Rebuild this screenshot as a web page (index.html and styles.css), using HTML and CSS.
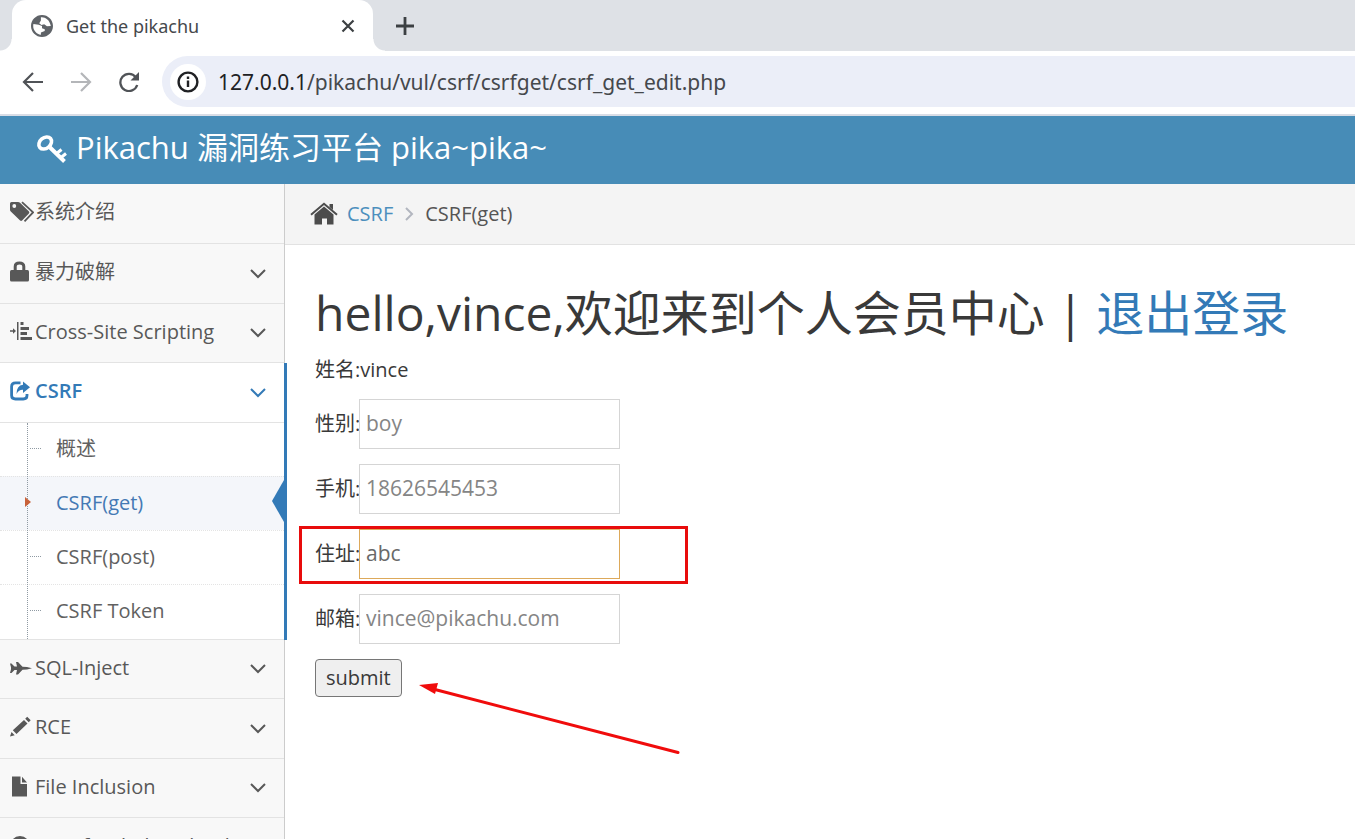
FILE: index.html
```html
<!DOCTYPE html>
<html lang="zh-CN">
<head>
<meta charset="utf-8">
<title>Get the pikachu</title>
<link rel="stylesheet" href="styles.css">
</head>
<body>
<div class="window">
  <div class="tabstrip">
    <div class="tab">
      <svg class="favicon" viewBox="2 2 20 20" aria-hidden="true"><path fill="#5f6368" d="M12 2C6.480 2 2 6.480 2 12s4.480 10 10 10 10-4.480 10-10S17.520 2 12 2zm-1 17.930c-3.950-.490-7-3.850-7-7.930 0-.620.080-1.210.210-1.790L9 10.800l3 1.200v2l2.500 1v1.500L11 18zM20 12l-3.500.3L14 10.500 11.500 11 9.500 9.500 11 7V4.100c3.500-.5 8 2 9 7.900z" transform="matrix(1 0 0 1 0 0)"/></svg>
      <span class="tab-title">Get the pikachu</span>
      <button class="icon-btn tab-close" aria-label="Close tab"><svg width="14" height="14" viewBox="0 0 14 14"><path d="m1.500 1.500 11 11m0-11-11 11" stroke="#3c4043" stroke-width="2.200"/></svg></button>
    </div>
    <button class="icon-btn new-tab" aria-label="New tab"><svg width="18" height="18" viewBox="0 0 18 18"><path d="M9 0v18M0 9h18" stroke="#3c4043" stroke-width="2.800"/></svg></button>
  </div>
  <div class="toolbar">
    <button class="icon-btn" aria-label="Back"><svg width="22" height="20" viewBox="0 0 22 20"><path d="M21 10H2m9-9-9 9 9 9" fill="none" stroke="#505357" stroke-width="2.200"/></svg></button>
    <button class="icon-btn" aria-label="Forward"><svg width="22" height="20" viewBox="0 0 22 20"><path d="M1 10h19m-9-9 9 9-9 9" fill="none" stroke="#b4b6b9" stroke-width="2.200"/></svg></button>
    <button class="icon-btn" aria-label="Reload"><svg width="22" height="20" viewBox="0 0 22 20"><path d="M17.800 5.200A8.600 8.600 0 1 0 19.200 13" fill="none" stroke="#505357" stroke-width="2.300"/><path d="M21 0v8.500h-8.500z" fill="#505357"/></svg></button>
    <div class="omnibox">
      <span class="site-info"><svg width="22" height="22" viewBox="0 0 22 22"><circle cx="11" cy="11" r="9.400" fill="none" stroke="#202124" stroke-width="2.400"/><path d="M11 9.500V16M11 5.500V8" stroke="#202124" stroke-width="2.400"/></svg></span>
      <span class="url"><b>127.0.0.1</b>/pikachu/vul/csrf/csrfget/csrf_get_edit.php</span>
    </div>
  </div>
  <header class="navbar">
    <svg width="32" height="30" viewBox="0 0 32 30" aria-hidden="true"><g fill="none" stroke="#fff"><ellipse cx="9.200" cy="9" rx="7" ry="5.300" stroke-width="3.600" transform="rotate(-40 9.200 9)"/><path d="M13 12.500 28.500 27.500" stroke-width="4"/><path d="m20 20 5.500-4.500M24.500 24l5.500-4.500" stroke-width="3"/></g></svg>
    <span class="brand">Pikachu 漏洞练习平台 pika~pika~</span>
  </header>
  <div class="body">
    <nav class="sidebar">
      <ul class="menu">
        <li><a class="item" href="#"><svg class="ico" viewBox="0 0 24 22"><path fill="currentColor" d="M0 2.500Q0 1 1.500 1H8q1.200 0 2 .8l9 8.700q.8 1-.1 1.900l-6.800 7.200q-1 .9-2 0L.8 10.500Q0 9.800 0 8.500z"/><circle cx="4.300" cy="5" r="1.900" fill="#f8f8f8"/><path d="m12 1.200 11 10.200-8.500 9" fill="none" stroke="currentColor" stroke-width="1.800"/></svg>系统介绍</a></li>
        <li><a class="item" href="#"><svg class="ico" viewBox="0 0 24 22"><path fill="currentColor" d="M1.500 9h16q1.500 0 1.500 1.500V19q0 1.500-1.500 1.500h-16Q0 20.500 0 19v-8.500Q0 9 1.500 9z"/><path d="M5.200 10V5.500q0-3.500 4.300-3.500t4.300 3.500V10" fill="none" stroke="currentColor" stroke-width="3"/></svg>暴力破解<svg class="chev" viewBox="0 0 16 10"><path d="m1 1 7 7 7-7"/></svg></a></li>
        <li><a class="item" href="#"><svg class="ico wide" viewBox="0 0 24 22"><path fill="currentColor" d="M0 9.300h3v-2l3 2.700-3 2.700v-2H0zM7 1h1.500v18H7zM10.500 1h3v3h-3zM10.500 6h8.500v3h-8.500zM10.500 11h6.500v3h-6.500zM10.500 16h11.500v3H10.500z"/></svg>Cross-Site Scripting<svg class="chev" viewBox="0 0 16 10"><path d="m1 1 7 7 7-7"/></svg></a></li>
        <li class="open"><a class="item" href="#"><svg class="ico" viewBox="0 0 24 22"><path d="M10.500 2.800H5.500Q1.600 2.800 1.600 6.500v9Q1.600 19 5.500 19h7.800q3.700 0 3.700-3.500V14" fill="none" stroke="currentColor" stroke-width="2.800"/><path fill="currentColor" d="M13 1.500 20 7.200 13 13V9.800q-4-.3-6.500 4.200Q6.500 5.500 13 4.800z"/></svg>CSRF<svg class="chev" viewBox="0 0 16 10"><path d="m1 1 7 7 7-7"/></svg></a>
          <ul class="submenu">
            <li><a href="#">概述</a></li>
            <li class="current"><a href="#">CSRF(get)</a></li>
            <li><a href="#">CSRF(post)</a></li>
            <li><a href="#">CSRF Token</a></li>
          </ul>
        </li>
        <li><a class="item" href="#"><svg class="ico" viewBox="0 0 24 22"><path fill="currentColor" d="m0 6.500 1.500 0L4.500 9.500H7L6 5h2l4.500 4.700L17 10l5 1.300-5 1.200-4.500.2L8 17.500H6L7 13H4.500l-3 3H0l1-3.800v-1.900z"/></svg>SQL-Inject<svg class="chev" viewBox="0 0 16 10"><path d="m1 1 7 7 7-7"/></svg></a></li>
        <li><a class="item" href="#"><svg class="ico" viewBox="0 0 24 22"><path fill="currentColor" d="m0 20.500 1.500-4.500 3.200 3.200zM2.800 14.200 14 4l3.500 3.500L6.500 18zM15.200 2.800l2-2 3.500 3.500-2 2z"/></svg>RCE<svg class="chev" viewBox="0 0 16 10"><path d="m1 1 7 7 7-7"/></svg></a></li>
        <li><a class="item" href="#"><svg class="ico" viewBox="0 0 24 22"><path fill="currentColor" d="M2 .5h8.500v7.500h6.500v12.500H2zM12 .8l5 5.700h-5z"/></svg>File Inclusion<svg class="chev" viewBox="0 0 16 10"><path d="m1 1 7 7 7-7"/></svg></a></li>
        <li><a class="item" href="#"><svg class="ico" viewBox="0 0 24 22"><circle cx="10" cy="11" r="8.500" fill="none" stroke="currentColor" stroke-width="3"/><path d="M10 5v8m-4-3 4 4 4-4" fill="none" stroke="currentColor" stroke-width="2"/></svg>Unsafe Filedownload<svg class="chev" viewBox="0 0 16 10"><path d="m1 1 7 7 7-7"/></svg></a></li>
      </ul>
    </nav>
    <main class="main">
      <div class="crumbs">
        <svg width="28" height="24" viewBox="0 0 28 24" aria-hidden="true"><path d="m1 12.800 13-11 13 11" fill="none" stroke="#4c4c4c" stroke-width="2"/><path fill="#4c4c4c" d="M19.500 2H23v6l-3.500-3zM14 4.500l9.500 8v10h-6.500V16.500h-5v6H4.500v-10z"/></svg>
        <a href="#">CSRF</a>
        <svg width="10" height="14" viewBox="0 0 10 14" aria-hidden="true"><path d="m2 1 6 6-6 6" fill="none" stroke="#b2b6bf" stroke-width="2"/></svg>
        <span>CSRF(get)</span>
      </div>
      <form class="profile" onsubmit="return false">
        <h1>hello,vince,欢迎来到个人会员中心 | <a href="#">退出登录</a></h1>
        <p class="name">姓名:vince</p>
        <div class="row"><label for="sex">性别:</label><input id="sex" value="boy"></div>
        <div class="row"><label for="phone">手机:</label><input id="phone" value="18626545453"></div>
        <div class="row marked"><label for="addr">住址:</label><input id="addr" class="active" value="abc"></div>
        <div class="row"><label for="mail">邮箱:</label><input id="mail" value="vince@pikachu.com"></div>
        <div class="actions"><button class="submit">submit</button>
          <svg class="arrow" width="264" height="74" viewBox="0 0 264 74" aria-hidden="true"><path d="M14 7 259 70.500" stroke="#f00c0c" stroke-width="3" stroke-linecap="round"/><path d="m0 3 19-2-3 11z" fill="#f00c0c"/></svg>
        </div>
      </form>
    </main>
  </div>
</div>
</body>
</html>
```

FILE: styles.css
```css
*, *::before, *::after { box-sizing: border-box; }
body {
  margin: 0;
  font: 20px/30px "Open Sans", "Noto Sans CJK SC", sans-serif;
  color: #393939;
  background: #fff;
}
a { color: #337ab7; text-decoration: none; }
ul { list-style: none; margin: 0; padding: 0; }
svg { flex: none; display: block; }
.window { height: 100vh; overflow: hidden; display: flex; flex-direction: column; }
.icon-btn { border: 0; background: none; padding: 0; display: flex; }

.tabstrip { flex: none; height: 51px; background: #dee1e6; display: flex; padding-left: 12px; }
.tab {
  position: relative;
  width: 361px;
  display: flex;
  align-items: center;
  padding: 0 18px 0 19px;
  background: #fff;
  border-radius: 14px 14px 0 0;
}
.tab::before, .tab::after {
  content: "";
  position: absolute;
  bottom: 0;
  width: 12px;
  height: 12px;
}
.tab::before { right: 100%; background: radial-gradient(circle at 0 0, transparent 11px, #fff 12px); }
.tab::after { left: 100%; background: radial-gradient(circle at 100% 0, transparent 11px, #fff 12px); }
.favicon { width: 22px; height: 22px; margin-right: 13px; }
.tab-title { flex: 1; color: #45484c; font-family: "Noto Sans", sans-serif; font-size: 18px; }
.new-tab { align-items: center; margin-left: 23px; }

.toolbar {
  flex: none;
  height: 65px;
  display: flex;
  align-items: center;
  gap: 26px;
  padding: 0 0 2px 22px;
  border-bottom: 2px solid #d9dde6;
}
.omnibox {
  flex: 1;
  height: 51px;
  margin-left: -4px;
  display: flex;
  align-items: center;
  gap: 12px;
  padding-left: 8px;
  background: #ebeef8;
  border-radius: 26px 0 0 26px;
}
.site-info {
  width: 36px;
  height: 36px;
  display: grid;
  place-items: center;
  background: #fff;
  border-radius: 50%;
}
.url { color: #45484c; font-family: "Noto Sans", sans-serif; font-size: 21px; }
.url b { font-weight: 400; color: #202124; }

.navbar {
  flex: none;
  height: 68px;
  display: flex;
  align-items: center;
  gap: 8px;
  padding: 0 0 2px 36px;
  background: #478cb7;
  color: #fff;
}
.brand { font-size: 31px; line-height: 40px; padding-bottom: 4px; }

.body { flex: 1; min-height: 0; display: flex; }
.sidebar { flex: none; width: 285px; background: #f8f8f8; border-right: 1px solid #ccc; }
.item {
  height: 60px;
  display: flex;
  align-items: center;
  padding: 0 18px 3px 10px;
  border-bottom: 1px solid #e3e3e3;
  color: #585858;
}
.menu > li:nth-child(2n+3) > .item { height: 59px; }
.ico { width: 24px; height: 22px; margin-right: 1px; }
.chev { width: 16px; height: 10px; margin: 3px 0 0 auto; fill: none; stroke: currentColor; stroke-width: 2; }
.open { position: relative; background: #fff; }
.open::after {
  content: "";
  position: absolute;
  top: 0;
  bottom: 0;
  left: 284px;
  width: 3px;
  background: #337ab7;
}
.open > .item { color: #337ab7; font-weight: 600; }
.submenu { position: relative; border-bottom: 1px solid #e3e3e3; }
.submenu::before {
  content: "";
  position: absolute;
  z-index: 1;
  top: 0;
  bottom: 0;
  left: 27px;
  border-left: 1px dotted #8f9aa3;
}
.submenu li { position: relative; }
.submenu li + li { border-top: 1px dotted #e4e4e4; }
.submenu a {
  height: 53px;
  display: flex;
  align-items: center;
  padding-left: 56px;
  padding-bottom: 2px;
  color: #616161;
}
.submenu li:last-child a { height: 54px; }
.submenu li::before {
  content: "";
  position: absolute;
  left: 30px;
  top: 25px;
  width: 11px;
  border-top: 1px dotted #8f9aa3;
}
.submenu .current { background: #f4f6fa; }
.submenu .current a { color: #4479b4; }
.submenu .current::before {
  z-index: 2;
  left: 25px;
  top: 17px;
  width: 6px;
  height: 16px;
  border: 0;
  background: #c86139;
  clip-path: polygon(0 3px, 100% 8px, 0 13px);
}
.submenu .current::after {
  content: "";
  position: absolute;
  right: 0;
  top: 3px;
  width: 12px;
  height: 42px;
  background: #337ab7;
  clip-path: polygon(100% 0, 100% 100%, 0 50%);
}

.main { flex: 1; min-width: 0; }
.crumbs {
  height: 61px;
  display: flex;
  align-items: center;
  padding-left: 25px;
  background: #f4f4f4;
  border-bottom: 1px solid #e2e2e2;
  color: #555;
}
.crumbs a { color: #4c8fbd; margin: 0 11px 0 9px; }
.crumbs span { margin-left: 11px; }
.profile { padding: 36px 30px 0; }
h1 { margin: 0; font-size: 48px; line-height: 64px; font-weight: 400; white-space: nowrap; }
.name { margin: 10px 0 14px; line-height: 30px; }
.row { position: relative; display: flex; align-items: center; margin-bottom: 15px; }
.row label { width: 44px; white-space: nowrap; }
.row input {
  width: 261px;
  height: 50px;
  padding: 0 6px 2px;
  border: 1px solid #d5d5d5;
  font: inherit;
  font-size: 21px;
  color: #858585;
  outline: 0;
}
.row .active { border-color: #dda95a; color: #696969; }
.marked::after {
  content: "";
  position: absolute;
  left: -16px;
  top: -3px;
  width: 389px;
  height: 58px;
  border: 3px solid #e80c0c;
  pointer-events: none;
}
.actions { position: relative; display: flex; }
.submit {
  height: 38px;
  padding: 0 10px;
  border: 1px solid #767676;
  border-radius: 4px;
  background: #efefef;
  color: #393939;
  font: inherit;
}
.arrow { position: absolute; left: 104px; top: 23px; }
```
